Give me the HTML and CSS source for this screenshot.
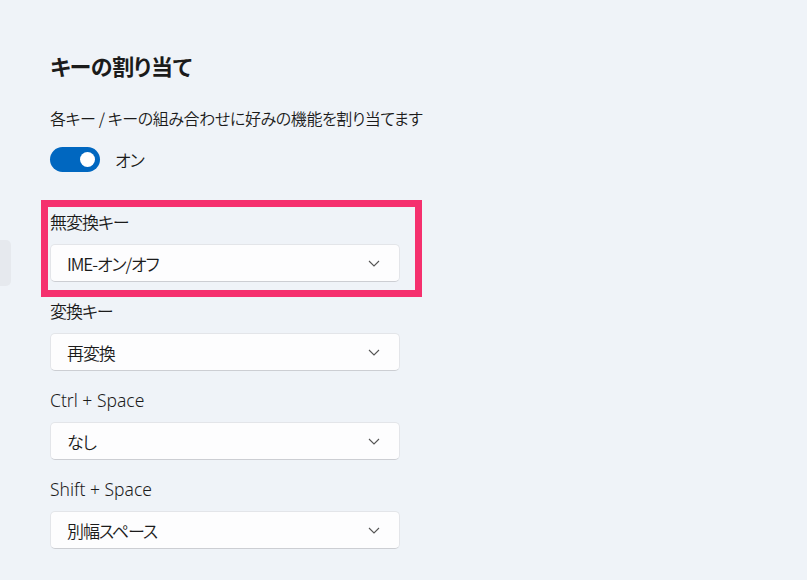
FILE: index.html
```html
<!DOCTYPE html>
<html lang="ja">
<head>
    <meta charset="UTF-8">
    <meta name="viewport" content="width=device-width, initial-scale=1.0">
    <title>キーの割り当て</title>
    <link rel="stylesheet" href="styles.css">
</head>
<body>
    <div class="page">
        <aside class="nav">
            <div class="nav-item"></div>
        </aside>

        <main class="content">
            <h1 class="title">キーの割り当て</h1>
            <p class="desc">各キー / キーの組み合わせに好みの機能を割り当てます</p>

            <div class="toggle-row">
                <span class="toggle"><span class="knob"></span></span>
                <span class="toggle-label">オン</span>
            </div>

            <div class="fields">
                <div class="field marked">
                    <label class="field-label">無変換キー</label>
                    <div class="select">
                        <span>IME-オン/オフ</span>
                        <svg class="chev" width="12" height="7" viewBox="0 0 12 7"><path d="M1 1l5 5 5-5" fill="none" stroke="#555" stroke-width="1.1"/></svg>
                    </div>
                    <div class="mark"></div>
                </div>

                <div class="field">
                    <label class="field-label">変換キー</label>
                    <div class="select">
                        <span>再変換</span>
                        <svg class="chev" width="12" height="7" viewBox="0 0 12 7"><path d="M1 1l5 5 5-5" fill="none" stroke="#555" stroke-width="1.1"/></svg>
                    </div>
                </div>

                <div class="field">
                    <label class="field-label latin">Ctrl + Space</label>
                    <div class="select">
                        <span>なし</span>
                        <svg class="chev" width="12" height="7" viewBox="0 0 12 7"><path d="M1 1l5 5 5-5" fill="none" stroke="#555" stroke-width="1.1"/></svg>
                    </div>
                </div>

                <div class="field">
                    <label class="field-label latin">Shift + Space</label>
                    <div class="select">
                        <span>別幅スペース</span>
                        <svg class="chev" width="12" height="7" viewBox="0 0 12 7"><path d="M1 1l5 5 5-5" fill="none" stroke="#555" stroke-width="1.1"/></svg>
                    </div>
                </div>
            </div>
        </main>
    </div>
</body>
</html>
```

FILE: styles.css
```css
*{
    margin: 0;
    padding: 0;
    box-sizing: border-box;
}
body{
    background: #eff3f8;
    color: #1b1b1b;
    font-family: "Noto Sans CJK JP", sans-serif;
    font-feature-settings: "palt";
    font-weight: 350;
    width: 807px;
    height: 580px;
    overflow: hidden;
}
.page{
    display: flex;
}
.nav{
    width: 11px;
    padding-top: 240px;
}
.nav-item{
    height: 46px;
    background: #e6e9ee;
    border-radius: 0 5px 5px 0;
}
.content{
    padding: 48px 0 0 39px;
}
.title{
    font-size: 22px;
    font-weight: 700;
    line-height: 34px;
    letter-spacing: -0.3px;
}
.desc{
    margin-top: 24px;
    font-size: 16px;
    line-height: 24px;
    letter-spacing: -0.4px;
}
.toggle-row{
    display: flex;
    align-items: center;
    margin-top: 17px;
    gap: 15px;
}
.toggle{
    display: flex;
    justify-content: flex-end;
    align-items: center;
    width: 50px;
    height: 25px;
    padding-right: 5px;
    background: #0067c0;
    border-radius: 13px;
}
.knob{
    width: 15px;
    height: 15px;
    background: #fff;
    border-radius: 50%;
}
.toggle-label{
    font-size: 17px;
    letter-spacing: -1px;
}
.fields{
    margin-top: 36px;
}
.field{
    position: relative;
    width: 350px;
    margin-bottom: 15px;
}
.field-label{
    display: block;
    font-size: 17px;
    line-height: 28px;
    margin-bottom: 8px;
    letter-spacing: -1px;
}
.latin{
    font-family: "Noto Sans", sans-serif;
    font-size: 17.5px;
    letter-spacing: 0;
}
.select{
    display: flex;
    justify-content: space-between;
    align-items: center;
    height: 38px;
    padding: 0 19px 0 16px;
    background: #fdfdfe;
    border: 1px solid #e3e5e9;
    border-bottom-color: #ccced3;
    border-radius: 5px;
    font-size: 17px;
    letter-spacing: -1.1px;
}
.chev{
    display: block;
}
/* annotation frame over the first field */
.mark{
    position: absolute;
    left: -9px;
    top: -8px;
    width: 381px;
    height: 97px;
    border: 7px solid #f5306e;
    pointer-events: none;
}
```
